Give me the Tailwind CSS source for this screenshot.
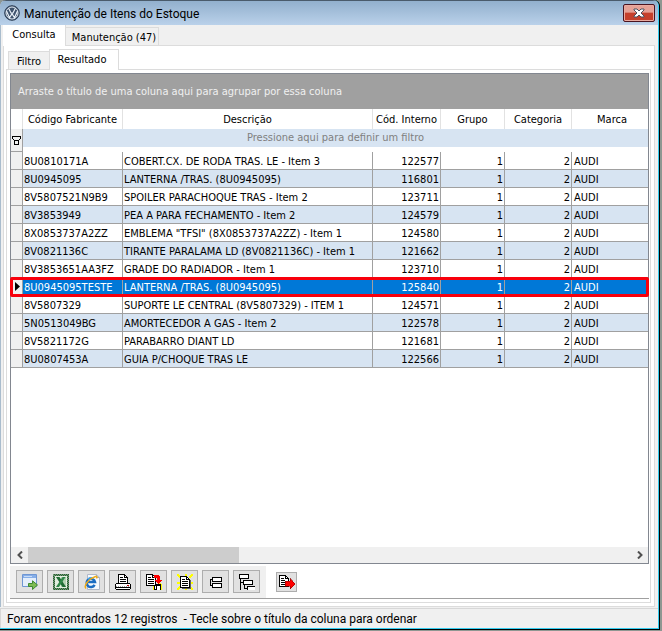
<!DOCTYPE html>
<html lang="pt-BR">
<head>
  <meta charset="UTF-8" />
  <meta name="viewport" content="width=device-width, initial-scale=1.0" />
  <title>Manutenção de Itens do Estoque</title>
  <script src="https://cdn.jsdelivr.net/npm/@tailwindcss/browser@4"></script>
</head>
<body class="h-screen flex bg-[#8f9792] font-['DejaVu_Sans_Condensed','DejaVu_Sans',sans-serif] text-[11px] text-black overflow-hidden">

  <!-- Window -->
  <div class="flex-1 min-w-0 flex flex-col mr-[2px] mb-px border-r border-b border-black rounded-t-md bg-black">
    <div class="flex-1 min-h-0 flex flex-col border-r border-b border-[#35cdf0] rounded-t-md bg-[#f0f0f0] overflow-hidden">

      <!-- Title bar -->
      <header class="h-[25px] shrink-0 flex items-center gap-1 pl-1 pr-[3px] border-t border-[#4a5b6b] bg-linear-to-b from-[#92b0cd] to-[#bad1ea]">
        <svg class="w-4 h-4" viewBox="0 0 16 16" fill="none">
          <circle cx="8" cy="8" r="7.3" fill="#40546e" stroke="#2d3e55" />
          <circle cx="8" cy="8" r="6" stroke="#e2ebf4" />
          <path d="M4.6 3.2 7 8h2l2.400-4.800M2.500 6l3 6.800L8 8.600l2.500 4.200 3-6.800" stroke="#e8f0f8" stroke-width="1.200" />
        </svg>
        <h1 class="flex-1 pt-px font-[Roboto,sans-serif] text-xs">Manutenção de Itens do Estoque</h1>
        <button aria-label="Fechar" class="w-8 h-[18px] flex items-center justify-center rounded-xs border border-[#4a1420] bg-linear-to-b from-[#e5a196] from-45% to-[#c5402c] to-50% shadow-[inset_0_0_0_1px_#e9aaa0]">
          <svg class="w-3 h-[10px]" viewBox="0 0 12 10">
            <path d="M1 1h3l2 2 2-2h3v1L8 5l3 3v1H8L6 7 4 9H1V8l3-3-3-3z" fill="#fff" stroke="#4d5260" />
          </svg>
        </button>
      </header>

      <main class="flex-1 min-h-0 flex flex-col pl-[2px] pr-[3px] border-l border-[#a9bccd]">

        <!-- Main tabs -->
        <nav class="h-5 shrink-0 flex items-end relative z-10" role="tablist">
          <button role="tab" aria-selected="true" class="w-[63px] h-[21px] -mb-px bg-white border-r border-[#dcdcdc]">Consulta</button>
          <button role="tab" class="w-[93px] h-[18px] pt-[2px] pl-1 border-t border-r border-[#dcdcdc] whitespace-nowrap">Manutenção (47)</button>
        </nav>

        <section class="flex-1 min-h-0 flex flex-col bg-white border border-[#dcdcdc] pt-[3px] pl-[2px] pr-[3px] pb-[3px]">

          <!-- Inner tabs -->
          <nav class="h-5 shrink-0 flex items-end pl-[2px] relative z-10" role="tablist">
            <button role="tab" class="w-[41px] h-[18px] pt-[2px] bg-[#f0f0f0] border-t border-l border-[#dcdcdc]">Filtro</button>
            <button role="tab" aria-selected="true" class="w-[70px] h-[21px] -mb-px pr-1 bg-white border-t border-x border-[#dcdcdc]">Resultado</button>
          </nav>

          <div class="flex-1 min-h-0 flex flex-col border border-[#dcdcdc] pl-[3px] pr-px pt-[3px] pb-[3px]">

            <!-- Grid -->
            <div class="flex-1 min-h-0 flex flex-col border border-[#828790]">
              <div class="h-[35px] shrink-0 flex items-center px-[7px] pt-[2px] bg-[#a0a0a0] text-[#f0f0f0]">Arraste o título de uma coluna aqui para agrupar por essa coluna</div>

              <div class="flex-1 min-h-0">
                <table class="w-full table-fixed border-separate border-spacing-0">
                  <colgroup>
                    <col class="w-3" />
                    <col class="w-[100px]" />
                    <col class="w-[250px]" />
                    <col class="w-[68px]" />
                    <col class="w-16" />
                    <col class="w-[67px]" />
                    <col />
                  </colgroup>
                  <thead>
                    <tr class="h-5 whitespace-nowrap">
                      <th class="p-0 border-r border-[#e2e2e2]"></th>
                      <th class="p-0 pt-[2px] font-normal border-r border-[#e2e2e2]">Código Fabricante</th>
                      <th class="p-0 pt-[2px] font-normal border-r border-[#e2e2e2]">Descrição</th>
                      <th class="p-0 pt-[2px] font-normal border-r border-[#e2e2e2]">Cód. Interno</th>
                      <th class="p-0 pt-[2px] font-normal border-r border-[#e2e2e2]">Grupo</th>
                      <th class="p-0 pt-[2px] font-normal border-r border-[#e2e2e2]">Categoria</th>
                      <th class="p-0 pt-[2px] pl-1 font-normal">Marca</th>
                    </tr>
                    <tr class="h-[18px]">
                      <td rowspan="2" class="p-0 bg-[#f0f0f0] border-r border-b border-[#a0a0a0]">
                        <svg class="w-[9px] h-[9px] ml-px" viewBox="0 0 9 9" fill="none" stroke="#000" shape-rendering="crispEdges">
                          <path d="M.5 2.500v-2h8v2l-2 2h-4l-2-2M2.500 4.500v4h4v-4" />
                        </svg>
                      </td>
                      <td colspan="6" class="p-0 bg-[#d7e4f2] text-center text-[#808080]">
                        <button class="block w-full leading-[18px]">Pressione aqui para definir um filtro</button>
                      </td>
                    </tr>
                    <tr class="h-[5px]"><td colspan="6" class="p-0"></td></tr>
                  </thead>
                  <tbody id="rows"></tbody>
                </table>
              </div>

              <!-- Horizontal scroll -->
              <div class="h-4 shrink-0 flex bg-[#f0f0f0]">
                <button aria-label="Rolar para a esquerda" class="w-[17px] flex items-center justify-center">
                  <svg class="w-[6px] h-2" viewBox="0 0 6 8"><path d="M5 .5 1.500 4 5 7.500" fill="none" stroke="#505050" stroke-width="2" /></svg>
                </button>
                <div class="flex-1"><div class="w-[35%] h-full bg-[#cdcdcd]"></div></div>
                <button aria-label="Rolar para a direita" class="w-[17px] flex items-center justify-center">
                  <svg class="w-[6px] h-2" viewBox="0 0 6 8"><path d="M1 .5 4.500 4 1 7.500" fill="none" stroke="#505050" stroke-width="2" /></svg>
                </button>
              </div>
            </div>

            <!-- Toolbar -->
            <div class="h-[35px] shrink-0 flex items-center gap-[10px] border-b border-[#a0a0a0] pt-px">
              <div class="h-8 flex items-center gap-1 px-[6px] bg-[#f0f0f0]">
                <button aria-label="Exportar" class="w-[27px] h-[23px] flex items-center justify-center bg-[#e1e1e1] border border-[#adadad]">
                  <svg class="w-4 h-4" viewBox="0 0 16 16">
                    <path d="M.5.5h14v12H.5z" fill="#e4eefb" stroke="#6f96d2" />
                    <path d="M1 1h13v3H1z" fill="#86aee8" />
                    <path d="M2 2h8v1H2z" fill="#c9ddf7" />
                    <path d="M6.500 9.500h4V6.800L15.500 11l-5 4.500v-3h-4z" fill="#7dbb52" stroke="#3f8a32" />
                  </svg>
                </button>
                <button aria-label="Excel" class="w-[27px] h-[23px] flex items-center justify-center bg-[#e1e1e1] border border-[#adadad]">
                  <svg class="w-4 h-4" viewBox="0 0 16 16">
                    <path d="M0 0h16v16H0z" fill="#6f9973" />
                    <path d="M.5.5h15v15H.5zM1.500 1.500h13v13h-13z" fill="none" stroke="#2a5c33" stroke-dasharray="1 1" shape-rendering="crispEdges" />
                    <path d="M2 2h12v12H2z" fill="#e3efe0" />
                    <path d="M8 3h5v10H8z" fill="#b5d3b4" />
                    <path d="M3 3h3.500L13 13H9.500z" fill="#1f6c34" />
                    <path d="M12.500 3H9.500L3 13h3z" fill="#2f8748" />
                  </svg>
                </button>
                <button aria-label="Internet Explorer" class="w-[27px] h-[23px] flex items-center justify-center bg-[#e1e1e1] border border-[#adadad]">
                  <svg class="w-4 h-4" viewBox="0 0 16 16" fill="none">
                    <path d="M3.500.5h9l3 3v12h-12z" fill="#f7f9fc" stroke="#b0b8c8" />
                    <path d="M12.500.5v3h3" fill="#c4d0e4" stroke="#a5aec0" />
                    <path d="M10.600 10.800A4.200 4.200 0 1 1 11 8H4" stroke="#1b6cc2" stroke-width="2.500" />
                    <path d="M4 5.200a4 4 0 0 1 5.500-.7" stroke="#4ba9ea" stroke-width="1.500" />
                    <path d="M2 14.500C-.5 12 4 5 11.500 2.500c2-.5 1.500 1 1 2" stroke="#f0ac18" stroke-width="1.500" />
                  </svg>
                </button>
                <button aria-label="Imprimir" class="w-[27px] h-[23px] flex items-center justify-center bg-[#e1e1e1] border border-[#adadad]">
                  <svg class="w-4 h-4" viewBox="0 0 16 16" fill="none" stroke="#000" shape-rendering="crispEdges">
                    <path d="M3.500 9.500v-9h6l3 3v6" fill="#fff" />
                    <path d="M9.500.5v3h3M5 3.500h3M5 5.500h6M5 7.500h6" />
                    <path d="M.5 10.500l1-1h13l1 1v4l-1 1h-13l-1-1z" fill="#fff" />
                    <path d="M1 12.500h14" stroke="#a0a0a0" stroke-dasharray="1 1" />
                    <path d="M1 13.500h14" />
                    <path d="M12 11h2v1h-2z" fill="#c00000" stroke="none" />
                  </svg>
                </button>
                <button aria-label="Localizar registro" class="w-[27px] h-[23px] flex items-center justify-center bg-[#e1e1e1] border border-[#adadad]">
                  <svg class="w-4 h-4" viewBox="0 0 16 16" fill="none" stroke="#000" shape-rendering="crispEdges">
                    <path d="M7 10h8v6H7z" fill="#000" stroke="none" />
                    <path d="M7 12h1v4H7zM13 9h2v1h-2zM15 10h1v6h-1z" fill="#ff0" stroke="none" />
                    <path d="M9 12h1v3H9zM11 12h3v4h-3z" fill="#fff" stroke="none" />
                    <path d="M.5.5h6l3 3v8h-9z" fill="#fff" />
                    <path d="M6.500.5v3h3M2 3.500h3M2 5.500h6M2 7.500h6M2 9.500h6" />
                    <path d="M8 1h4l2 2v3h2l-3.500 4L9 6h2V4H8z" fill="#f00" stroke="none" />
                  </svg>
                </button>
                <button aria-label="Novo relatório" class="w-[27px] h-[23px] flex items-center justify-center bg-[#e1e1e1] border border-[#adadad]">
                  <svg class="w-4 h-4" viewBox="0 0 16 16" fill="none" stroke="#000" shape-rendering="crispEdges">
                    <path d="M0 0l4 4M8.500 0v3M16 0l-4 4M0 8.500h4M12 8.500h4M0 16l4-4M8.500 13v3M16 16l-4-4" stroke="#ff0" stroke-width="2" />
                    <path d="M5 14.500h8.500V6" stroke="#606060" />
                    <path d="M3.500 2.500h6l3 3v8h-9z" fill="#fff" />
                    <path d="M9.500 2.500v3h3M5 5.500h3M5 7.500h6M5 9.500h6M5 11.500h6" />
                  </svg>
                </button>
                <button aria-label="Recolher grupos" class="w-[27px] h-[23px] flex items-center justify-center bg-[#e1e1e1] border border-[#adadad]">
                  <svg class="w-4 h-4" viewBox="0 0 16 16" fill="none" stroke="#000" shape-rendering="crispEdges">
                    <path d="M4.500 3.500h9v4h-9zM4.500 9.500h9v4h-9z" fill="#fff" />
                    <path d="M4 5.500H2.500v6H4" />
                  </svg>
                </button>
                <button aria-label="Expandir grupos" class="w-[27px] h-[23px] flex items-center justify-center bg-[#e1e1e1] border border-[#adadad]">
                  <svg class="w-4 h-4" viewBox="0 0 16 16" fill="none" stroke="#000" shape-rendering="crispEdges">
                    <path d="M.5.5h9v4h-9zM4.500 6.500h9v4h-9z" fill="#fff" />
                    <path d="M9 13h7v3H9z" fill="#fff" stroke="none" />
                    <path d="M8.500 16v-3.500H16" />
                    <path d="M1.500 5v11M2 8.500h2M5.500 11v3.500h3" />
                  </svg>
                </button>
              </div>
              <button aria-label="Sair" class="w-[21px] h-5 flex items-center justify-center bg-[#e1e1e1] border border-[#adadad]">
                <svg class="w-4 h-[14px]" viewBox="0 0 16 14" fill="none" stroke="#000" shape-rendering="crispEdges">
                  <path d="M.5.5h6l3 3v8h-9z" fill="#fff" />
                  <path d="M6.500.5v3h3M2 3.500h3M2 5.500h4M2 7.500h4M2 9.500h4" />
                  <path d="M6 6h5V3l5 6-5 5v-3H6z" fill="#f00" stroke="#800000" stroke-width=".5" />
                </svg>
              </button>
            </div>
          </div>
        </section>
      </main>

      <!-- Status bar -->
      <footer class="h-5 shrink-0 mt-px flex items-center pl-[6px] border-t border-l border-[#d7d7d7] font-[Roboto,sans-serif] text-xs whitespace-pre">Foram encontrados 12 registros  - Tecle sobre o título da coluna para ordenar</footer>
    </div>
  </div>

<script>
  const items = [
    ["8U0810171A", "COBERT.CX. DE RODA TRAS. LE - Item 3", 122577],
    ["8U0945095", "LANTERNA /TRAS. (8U0945095)", 116801],
    ["8V5807521N9B9", "SPOILER PARACHOQUE TRAS - Item 2", 123711],
    ["8V3853949", "PEA A PARA FECHAMENTO - Item 2", 124579],
    ["8X0853737A2ZZ", "EMBLEMA \"TFSI\" (8X0853737A2ZZ) - Item 1", 124580],
    ["8V0821136C", "TIRANTE PARALAMA LD (8V0821136C) - Item 1", 121662],
    ["8V3853651AA3FZ", "GRADE DO RADIADOR - Item 1", 123710],
    ["8U0945095TESTE", "LANTERNA /TRAS. (8U0945095)", 125840],
    ["8V5807329", "SUPORTE LE CENTRAL (8V5807329) - ITEM 1", 124571],
    ["5N0513049BG", "AMORTECEDOR A GAS - Item 2", 122578],
    ["8V5821172G", "PARABARRO DIANT LD", 121681],
    ["8U0807453A", "GUIA P/CHOQUE TRAS LE", 122566],
  ];
  const selected = 7;

  const cell = "p-0 pt-[3px] leading-[14px] border-b border-[#a0a0a0] whitespace-nowrap overflow-hidden";
  document.getElementById("rows").innerHTML = items.map(([code, name, id], i) => {
    let row = i % 2 ? "bg-[#d7e4f2]" : "bg-white";
    if (i === selected) row = "bg-[#0078d7] text-white relative";
    const marker = i === selected
      ? `<svg class="w-[5px] h-[9px] ml-1" viewBox="0 0 5 9"><path d="M0 0l5 4.500L0 9z" /></svg>
         <span class="absolute -inset-x-px -top-px -bottom-px border-3 border-[#f8000c] rounded-xs pointer-events-none"></span>`
      : "";
    return `
      <tr class="h-[18px] ${row}">
        <td class="p-0 bg-[#f0f0f0] text-black border-r border-b border-[#a0a0a0]">${marker}</td>
        <td class="${cell} border-r pl-px">${code}</td>
        <td class="${cell} border-r pl-px">${name}</td>
        <td class="${cell} border-r pr-px text-right">${id}</td>
        <td class="${cell} border-r pr-px text-right">1</td>
        <td class="${cell} border-r pr-px text-right">2</td>
        <td class="${cell} pl-[2px]">AUDI</td>
      </tr>`;
  }).join("");
</script>
</body>
</html>
